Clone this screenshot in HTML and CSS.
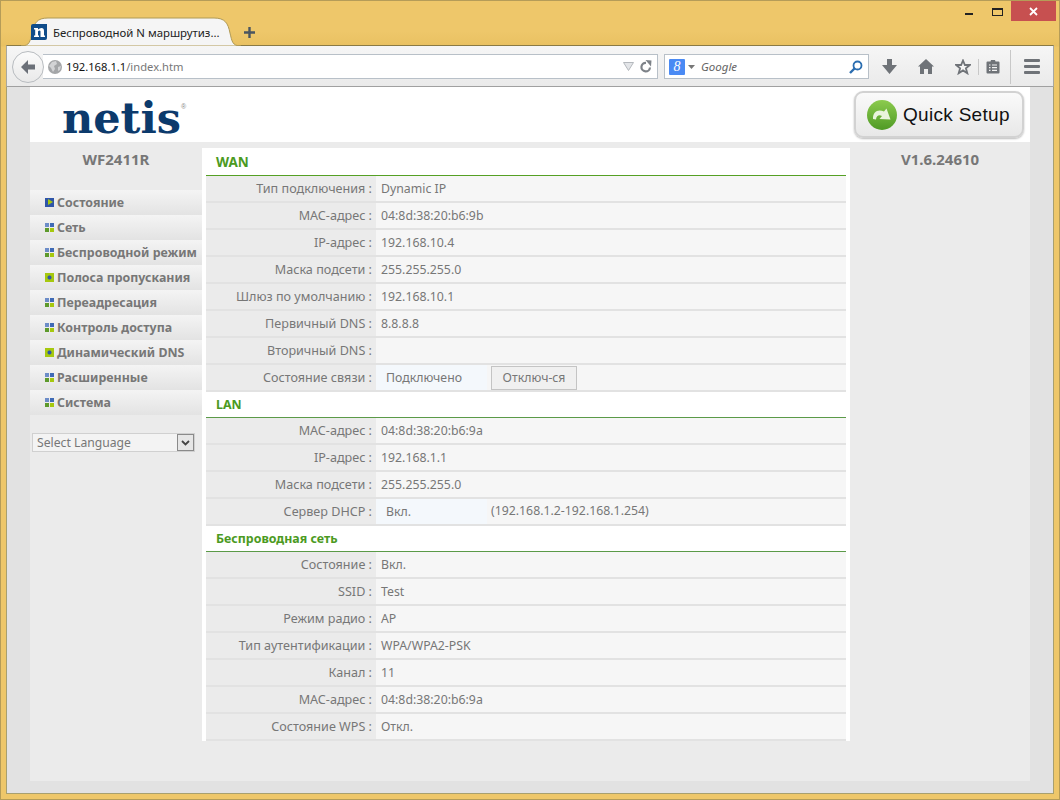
FILE: index.html
```html
<!DOCTYPE html>
<html lang="ru">
<head>
  <meta charset="UTF-8" />
  <title>Беспроводной N маршрутизатор</title>
  <link rel="stylesheet" href="styles.css">
</head>
<body>
<div class="window">
  <div class="titlebar">
    <div class="tab">
      <svg class="tab-shape" viewBox="0 0 220 29" preserveAspectRatio="none"><path d="M0 29C9 29 9 24 11 16C13 6 16 1 27 1H193C204 1 207 6 209 16C211 24 211 29 220 29Z" fill="#f5f5f5" stroke="#b09a55" stroke-width="1"/></svg>
      <svg class="favicon" viewBox="0 0 16 16"><path d="M2 0H16V14Q16 16 14 16H0V2Q0 0 2 0Z" fill="#0f4c8a"/><path d="M3 4H7V5.5Q8.500 4 10.500 4Q13 4 13 7V11.500H14V13H9.500V7.500Q9.500 6.500 8.500 6.500Q7.500 6.500 7 7.500V11.500H8V13H3V11.500H4.200V5.500H3Z" fill="#fff"/></svg>
      <span class="tab-title">Беспроводной N маршрутиз...</span>
    </div>
    <svg class="newtab" viewBox="0 0 11 11"><path d="M5.5 0V11M0 5.5H11" stroke="#4a5560" stroke-width="2.4"/></svg>
    <div class="winctl">
      <span class="ctl-min"></span>
      <span class="ctl-max"></span>
      <span class="ctl-close"><svg viewBox="0 0 9 9" width="9" height="9"><path d="M1 1L8 8M8 1L1 8" stroke="#fff" stroke-width="1.8"/></svg></span>
    </div>
  </div>

  <div class="toolbar">
    <div class="backbtn"><svg viewBox="0 0 16 14" width="16" height="14"><path d="M8 0L1 7L8 14V9.5H15V4.5H8Z" fill="#6b7078"/></svg></div>
    <div class="urlbar">
      <svg class="globe" viewBox="0 0 14 14" width="14" height="14"><circle cx="7" cy="7" r="7" fill="#a4a6a8"/><path d="M4 2L8 1L9 4L6 6L7 9L5 12L3 8L1 6ZM10 7L13 6L12 10L10 11Z" fill="#d2d3d5"/></svg>
      <span class="url"><b>192.168.1.1</b>/index.htm</span>
      <svg class="url-drop" viewBox="0 0 11 9" width="11" height="9"><path d="M0.5 0.5H10.5L5.5 8.5Z" fill="#e3e5e8" stroke="#b4b8bd"/></svg>
      <svg class="reload" viewBox="0 0 13 13" width="13" height="13"><path d="M11 7.5A4.3 4.3 0 1 1 7 2.8" fill="none" stroke="#7d8288" stroke-width="2.2"/><path d="M6.5 0L12.5 0.5L12 6.5Z" fill="#7d8288"/></svg>
    </div>
    <div class="searchbar">
      <span class="g-icon">8</span>
      <svg viewBox="0 0 7 4" width="7" height="4"><path d="M0 0H7L3.5 4Z" fill="#777"/></svg>
      <span class="search-text">Google</span>
      <svg class="lens" viewBox="0 0 14 14" width="14" height="14"><circle cx="8.5" cy="5.5" r="4" fill="none" stroke="#2a6db0" stroke-width="1.8"/><path d="M5.5 8.5L1 13" stroke="#2a6db0" stroke-width="2.4"/></svg>
    </div>
    <div class="tools">
      <svg viewBox="0 0 15 15" width="15" height="15"><path d="M5 0H10V6H15L7.5 15L0 6H5Z" fill="#6f7378"/></svg>
      <svg viewBox="0 0 16 15" width="16" height="15"><path d="M8 0L16 7.5H14V15H10V10H6V15H2V7.5H0Z" fill="#6f7378"/></svg>
      <svg viewBox="0 0 16 16" width="16" height="16"><path d="M8 1.5L9.9 6H14.8L10.9 9.2L12.3 14.2L8 11.4L3.7 14.2L5.1 9.2L1.2 6H6.1Z" fill="#f4f4f4" stroke="#6f7378" stroke-width="1.8"/></svg>
      <span class="tool-sep"></span>
      <svg viewBox="0 0 14 15" width="14" height="15"><path d="M1.5 2.5H4.5L5 1H9L9.5 2.5H12.5Q13.5 2.5 13.5 3.5V13.5Q13.5 14.5 12.5 14.5H1.5Q0.5 14.5 0.5 13.5V3.5Q0.5 2.5 1.5 2.5Z" fill="#6f7378"/><path d="M3 6H4.5M6 6H11M3 8.7H4.5M6 8.7H11M3 11.4H4.5M6 11.4H11" stroke="#f2f2f2" stroke-width="1.2"/></svg>
      <span class="tool-sep tall"></span>
      <div class="burger"><span></span><span></span><span></span></div>
    </div>
  </div>

  <div class="page">
    <div class="device">
      <div class="topbar">
        <div class="logo">netis<sup>®</sup></div>
        <div class="quick">
          <svg viewBox="0 0 30 30" width="30" height="30">
            <defs><linearGradient id="qs" x1="0" y1="0" x2="0" y2="1"><stop offset="0" stop-color="#8ccb4e"/><stop offset="1" stop-color="#4f9a25"/></linearGradient></defs>
            <circle cx="15" cy="15" r="15" fill="url(#qs)"/>
            <path d="M6 19C5.500 12 11 8.500 17 11.500L19.500 8.500L23.500 19.500L12.500 19L15 16C12 14.500 9.500 15.500 9 19.500Z" fill="#e9f4dc"/>
          </svg>
          <span>Quick Setup</span>
        </div>
      </div>
      <div class="columns">
        <div class="sidebar">
          <div class="model">WF2411R</div>
          <ul class="menu">
            <li><i class="ico ico-active"></i>Состояние</li>
            <li><i class="ico"></i>Сеть</li>
            <li><i class="ico"></i>Беспроводной режим</li>
            <li><i class="ico ico-dot"></i>Полоса пропускания</li>
            <li><i class="ico"></i>Переадресация</li>
            <li><i class="ico"></i>Контроль доступа</li>
            <li><i class="ico ico-dot"></i>Динамический DNS</li>
            <li><i class="ico"></i>Расширенные</li>
            <li><i class="ico"></i>Система</li>
          </ul>
          <div class="lang">
            <span>Select Language</span>
            <span class="lang-arrow"><svg viewBox="0 0 9 6" width="9" height="6"><path d="M1 1L4.5 4.500L8 1" fill="none" stroke="#444" stroke-width="1.8"/></svg></span>
          </div>
        </div>

        <div class="content">
          <h3 class="first">WAN</h3>
          <table>
            <tr><th>Тип подключения :</th><td>Dynamic IP</td></tr>
            <tr><th>MAC-адрес :</th><td>04:8d:38:20:b6:9b</td></tr>
            <tr><th>IP-адрес :</th><td>192.168.10.4</td></tr>
            <tr><th>Маска подсети :</th><td>255.255.255.0</td></tr>
            <tr><th>Шлюз по умолчанию :</th><td>192.168.10.1</td></tr>
            <tr><th>Первичный DNS :</th><td>8.8.8.8</td></tr>
            <tr><th>Вторичный DNS :</th><td></td></tr>
            <tr><th>Состояние связи :</th><td class="mixed"><span class="state">Подключено</span><button class="btn">Отключ-ся</button></td></tr>
          </table>
          <h3>LAN</h3>
          <table>
            <tr><th>MAC-адрес :</th><td>04:8d:38:20:b6:9a</td></tr>
            <tr><th>IP-адрес :</th><td>192.168.1.1</td></tr>
            <tr><th>Маска подсети :</th><td>255.255.255.0</td></tr>
            <tr><th>Сервер DHCP :</th><td class="mixed"><span class="state">Вкл.</span><span>(192.168.1.2-192.168.1.254)</span></td></tr>
          </table>
          <h3>Беспроводная сеть</h3>
          <table>
            <tr><th>Состояние :</th><td>Вкл.</td></tr>
            <tr><th>SSID :</th><td>Test</td></tr>
            <tr><th>Режим радио :</th><td>AP</td></tr>
            <tr><th>Тип аутентификации :</th><td>WPA/WPA2-PSK</td></tr>
            <tr><th>Канал :</th><td>11</td></tr>
            <tr><th>MAC-адрес :</th><td>04:8d:38:20:b6:9a</td></tr>
            <tr><th>Состояние WPS :</th><td>Откл.</td></tr>
          </table>
        </div>

        <div class="version">V1.6.24610</div>
      </div>
    </div>
  </div>
</div>
</body>
</html>
```

FILE: styles.css
```css
html, body {
  margin: 0;
  padding: 0;
}
body {
  width: 1060px;
  height: 800px;
  overflow: hidden;
  font-family: "Noto Sans", sans-serif;
  color: #777;
}
.window {
  box-sizing: border-box;
  width: 1060px;
  height: 800px;
  display: flex;
  flex-direction: column;
  background: linear-gradient(#eec76a 0, #eec76a 30px, #e9c162 45px, #eec76a 46px);
  border: 1px solid #b59c58;
  padding: 0 5px 5px;
}

/* title bar and tab */
.titlebar {
  height: 44px;
  flex: none;
  display: flex;
  align-items: flex-end;
  position: relative;
}
.tab {
  position: relative;
  width: 220px;
  height: 29px;
  margin-left: 15px;
  margin-bottom: -1px;
  display: flex;
  align-items: center;
  z-index: 1;
}
.tab-shape {
  position: absolute;
  left: 0;
  top: 0;
  width: 220px;
  height: 29px;
}
.favicon {
  position: relative;
  width: 16px;
  height: 16px;
  margin-left: 10px;
  margin-top: 1px;
}
.tab-title {
  position: relative;
  margin-left: 6px;
  margin-top: 1px;
  font: 11.4px "Noto Sans", sans-serif;
  color: #222;
  white-space: nowrap;
}
.newtab {
  width: 11px;
  height: 11px;
  margin-left: 3px;
  margin-bottom: 7px;
}
.winctl {
  margin-left: auto;
  align-self: flex-start;
  display: flex;
  align-items: flex-start;
}
.ctl-min {
  width: 8px;
  height: 2px;
  margin-top: 12px;
  background: #222;
}
.ctl-max {
  box-sizing: border-box;
  width: 11px;
  height: 8px;
  margin: 7px 0 0 19px;
  border: 1px solid #222;
  border-top-width: 2px;
}
.ctl-close {
  width: 45px;
  height: 20px;
  margin: 0 -2px 0 8px;
  background: #c75050;
  display: flex;
  align-items: center;
  justify-content: center;
}

/* toolbar */
.toolbar {
  height: 42px;
  flex: none;
  box-sizing: border-box;
  display: flex;
  align-items: center;
  background: linear-gradient(#f6f6f6, #eaeaea);
  border: 1px solid #a8a8a0;
  border-top-color: #8a7a45;
  border-bottom-color: #a0a0a0;
  padding-left: 5px;
  padding-top: 1px;
}
.backbtn {
  width: 30px;
  height: 30px;
  border: 1px solid #b8bcc0;
  border-radius: 50%;
  background: linear-gradient(#fbfbfb, #e9e9e9);
  display: flex;
  align-items: center;
  justify-content: center;
  flex: none;
  position: relative;
  z-index: 1;
}
.urlbar {
  box-sizing: border-box;
  width: 615px;
  height: 25px;
  margin-left: -1px;
  background: #fff;
  border: 1px solid #b8c0c8;
  border-left: none;
  display: flex;
  align-items: center;
  padding: 0 5px;
}
.globe {
  flex: none;
}
.url {
  margin-left: 4px;
  font-size: 11.2px;
  color: #777;
  flex: 1;
}
.url b {
  font-weight: normal;
  color: #111;
}
.url-drop {
  margin-right: 5px;
}
.searchbar {
  box-sizing: border-box;
  width: 205px;
  height: 25px;
  margin-left: 6px;
  background: #fff;
  border: 1px solid #b8c0c8;
  display: flex;
  align-items: center;
  padding: 0 5px 0 4px;
  gap: 3px;
}
.g-icon {
  width: 16px;
  height: 16px;
  background: #4a8af4;
  color: #fff;
  font: italic 14px/16px "Liberation Serif", serif;
  text-align: center;
  border-radius: 1px;
}
.search-text {
  margin-left: 3px;
  font-size: 11.5px;
  font-style: italic;
  color: #666;
  flex: 1;
}
.tools {
  display: flex;
  align-items: center;
  margin-left: 13px;
  gap: 21px;
  flex: 1;
}
.tools .tool-sep {
  width: 1px;
  height: 16px;
  background: #c8c8c8;
  margin: 0 -14px 0 -14px;
}
.tools .tool-sep.tall {
  height: 34px;
  margin: 0 -10px 0 -11px;
}
.burger {
  width: 16px;
  display: flex;
  flex-direction: column;
  gap: 3px;
  margin-left: 2px;
}
.burger span {
  height: 3px;
  background: #6f7378;
  border-radius: 1px;
}

/* router page */
.page {
  flex: 1;
  min-height: 0;
  background: #e2e2e2;
  border: 1px solid #a8a070;
  border-top: none;
}
.device {
  width: 1000px;
  height: 694px;
  margin: 0 auto;
  background: #ebebeb;
}
.topbar {
  height: 55px;
  background: #fff;
  display: flex;
  justify-content: space-between;
  align-items: flex-start;
  margin-bottom: 6px;
}
.logo {
  margin: 8px 0 0 32px;
  font: bold 43px/46px "DejaVu Serif", serif;
  color: #0c3a6c;
}
.logo sup {
  font: 7px/7px "Liberation Sans", sans-serif;
  color: #888;
  vertical-align: 24px;
}
.quick {
  box-sizing: border-box;
  width: 170px;
  height: 47px;
  margin: 4px 6px 0 0;
  display: flex;
  align-items: center;
  gap: 6px;
  padding-left: 11px;
  border: 2px solid #d2d2d2;
  border-radius: 9px;
  background: linear-gradient(#fafafa, #e8e8e8);
  box-shadow: 0 1px 2px #bbb;
  font: 19px "Liberation Sans", sans-serif;
  letter-spacing: 0.3px;
  color: #111;
}
.columns {
  display: flex;
  align-items: stretch;
}
.sidebar {
  width: 172px;
  flex: none;
}
.model, .version {
  font-size: 15px;
  font-weight: bold;
  text-align: center;
  color: #777;
  line-height: 22px;
}
.model {
  height: 42px;
}
.menu {
  list-style: none;
  margin: 0;
  padding: 0;
}
.menu li {
  height: 25px;
  box-sizing: border-box;
  padding-left: 15px;
  display: flex;
  align-items: center;
  font-size: 12.4px;
  font-weight: bold;
  color: #777;
  background: linear-gradient(#f4f4f4, #e3e3e3);
  white-space: nowrap;
}
.ico {
  width: 9px;
  height: 9px;
  margin-right: 3px;
  flex: none;
  background:
    linear-gradient(#6c8cc8, #6c8cc8) 0 0 / 4px 4px no-repeat,
    linear-gradient(#3f6ab5, #3f6ab5) 100% 0 / 4px 4px no-repeat,
    linear-gradient(#5d9a2c, #5d9a2c) 0 100% / 4px 4px no-repeat,
    linear-gradient(#a6c80e, #a6c80e) 100% 100% / 4px 4px no-repeat;
}
.ico-active {
  position: relative;
  background: #2f55a8;
}
.ico-active::after {
  content: "";
  position: absolute;
  left: 3px;
  top: 1px;
  border-left: 5px solid #a6c80e;
  border-top: 3.5px solid transparent;
  border-bottom: 3.5px solid transparent;
}
.ico-dot {
  background: radial-gradient(circle at center, #2f55a8 0, #2f55a8 1.5px, #a6c80e 2.5px);
}
.lang {
  box-sizing: border-box;
  width: 163px;
  height: 19px;
  margin: 18px 0 0 2px;
  border: 1px solid #d0d0d0;
  background: #f3f3f3;
  display: flex;
  align-items: center;
  justify-content: space-between;
  padding-left: 4px;
  font-size: 12.2px;
  color: #777;
}
.lang-arrow {
  box-sizing: border-box;
  width: 17px;
  height: 17px;
  background: #e6e6e6;
  border: 1px solid #8a8a8a;
  display: flex;
  align-items: center;
  justify-content: center;
}
.content {
  box-sizing: border-box;
  width: 648px;
  height: 593px;
  flex: none;
  background: #fff;
  padding: 0 4px;
}
.content h3 {
  height: 26px;
  margin: 0;
  box-sizing: border-box;
  padding-left: 10px;
  font-size: 12.4px;
  font-weight: bold;
  line-height: 25px;
  color: #4b9a22;
  border-bottom: 1px solid #5b9a48;
}
.content h3.first {
  height: 28px;
  line-height: 28px;
  font-size: 13.5px;
  border-bottom-color: #55a024;
}
.content table {
  width: 640px;
  border-collapse: separate;
  border-spacing: 0;
  table-layout: fixed;
}
.content th, .content td {
  height: 27px;
  padding: 0;
  box-sizing: border-box;
  font-size: 12.3px;
  font-weight: normal;
  color: #777;
  border-bottom: 2px solid #e2e2e2;
  white-space: nowrap;
}
.content th {
  width: 170px;
  padding-right: 4px;
  text-align: right;
  background: #ebebeb;
  font-size: 12.6px;
}
.content td {
  padding-left: 5px;
  background: #f6f6f6;
}
.content td.mixed {
  padding-left: 0;
}
.state {
  display: inline-block;
  box-sizing: border-box;
  width: 111px;
  height: 25px;
  line-height: 25px;
  padding-left: 10px;
  margin-right: 4px;
  background: #f4f8fc;
  vertical-align: middle;
}
.btn {
  width: 86px;
  height: 24px;
  padding: 0;
  border: 1px solid #c4c4c4;
  background: #f0f0f0;
  font: 12.3px "Noto Sans", sans-serif;
  color: #777;
  vertical-align: middle;
}
.version {
  flex: 1;
}
```
